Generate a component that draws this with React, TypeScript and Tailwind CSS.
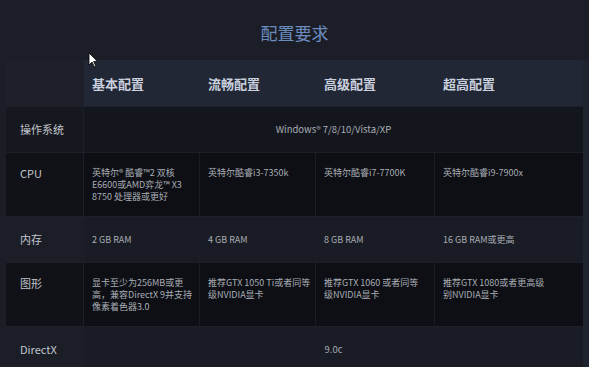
const COLS = ["基本配置", "流畅配置", "高级配置", "超高配置"];

type Row = {
  label: string;
  cells?: string[];
  span?: string;
  tall?: boolean;
  dark: "os" | "deep" | "mid";
};

const ROWS: Row[] = [
  { label: "操作系统", span: "Windows® 7/8/10/Vista/XP", dark: "os" },
  {
    label: "CPU",
    cells: [
      "英特尔® 酷睿™2 双核 E6600或AMD弈龙™ X3 8750 处理器或更好",
      "英特尔酷睿i3-7350k",
      "英特尔酷睿i7-7700K",
      "英特尔酷睿i9-7900x",
    ],
    tall: true,
    dark: "deep",
  },
  {
    label: "内存",
    cells: ["2 GB RAM", "4 GB RAM", "8 GB RAM", "16 GB RAM或更高"],
    dark: "mid",
  },
  {
    label: "图形",
    cells: [
      "显卡至少为256MB或更高，兼容DirectX 9并支持像素着色器3.0",
      "推荐GTX 1050 Ti或者同等级NVIDIA显卡",
      "推荐GTX 1060 或者同等级NVIDIA显卡",
      "推荐GTX 1080或者更高级别NVIDIA显卡",
    ],
    tall: true,
    dark: "deep",
  },
  { label: "DirectX", span: "9.0c", dark: "mid" },
];

const rowBg = {
  os: "bg-[#14161d]",
  deep: "bg-[#0d0f14]",
  mid: "bg-[#191c24]",
};

const labelBg = {
  os: "bg-[#16181f]",
  deep: "bg-[#101217]",
  mid: "bg-[#1b1e26]",
};

// right padding per column, so lines break where the reference breaks them
const cellPad = ["pr-[4px]", "pr-[4px]", "pr-[10px]", "pr-[34px]"];

const grid = "grid grid-cols-[78px_116px_116px_119px_148px]";

export default function App() {
  return (
    <div
      className="relative h-[367px] w-[589px] overflow-hidden bg-[#1b1e26]"
      style={{ fontFamily: '"Noto Sans CJK SC", "Noto Sans", sans-serif' }}
    >
      <div className="flex h-[60px] items-center justify-center pt-[6px] text-[17px] text-[#6c8cc0]">
        配置要求
      </div>

      <div className="ml-[6px] flex w-[583px]">
        <div className="w-[577px]">
          {/* header */}
          <div className={`${grid} h-[46px]`}>
            <div className="bg-[#1d2029]" />
            {COLS.map((c) => (
              <div
                key={c}
                className="flex items-center bg-[#222736] pl-[8px] pt-[2px] text-[13px] font-bold text-[#c9d0de]"
              >
                {c}
              </div>
            ))}
          </div>

          {ROWS.map((r) => (
            <div
              key={r.label}
              className={`${grid} ${r.tall ? "h-[64px]" : "h-[46px]"} ${rowBg[r.dark]} border-t border-[#1d2029]`}
            >
              <div
                className={`flex ${r.tall ? "items-start pt-[12px]" : "items-center"} ${labelBg[r.dark]} border-r border-[#1d2029] pl-[14px] text-[11px] text-[#c2c6ce]`}
              >
                {r.label}
              </div>
              {r.span ? (
                <div className="col-span-4 flex items-center justify-center text-[9.5px] text-[#a9adb5]">
                  {r.span}
                </div>
              ) : (
                r.cells!.map((c, i) => (
                  <div
                    key={i}
                    className={`flex ${r.tall ? "items-start pt-[14px]" : "items-center"} ${i < 3 ? "border-r border-[#1a1d24]" : ""} ${cellPad[i]} pl-[8px] text-[9px] leading-[12px] text-[#a9adb5]`}
                  >
                    {c}
                  </div>
                ))
              )}
            </div>
          ))}
        </div>
        <div className="w-[6px] bg-[#1e2330]" />
      </div>

      <svg
        className="absolute left-[88px] top-[52px]"
        width="11"
        height="16"
        viewBox="0 0 11 16"
      >
        <path d="M1 1 L1 13 L4 10 L6.5 15 L8 14.3 L5.6 9.4 L9.6 9.4 Z" fill="#fff" stroke="#000" strokeWidth="0.8" />
      </svg>
    </div>
  );
}
